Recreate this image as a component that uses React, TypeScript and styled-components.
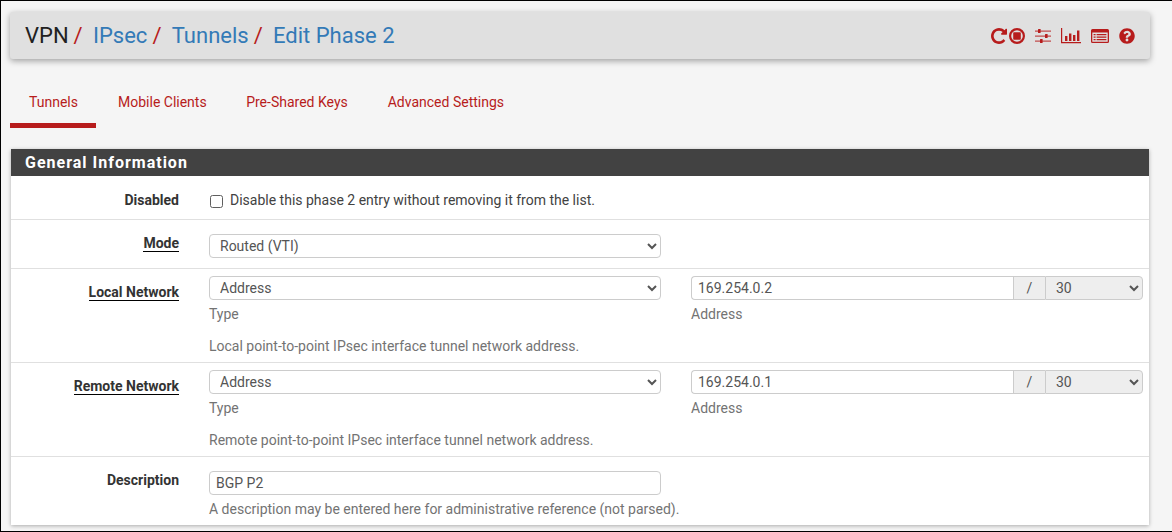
import styled, { createGlobalStyle } from 'styled-components';
import { FaQuestionCircle } from 'react-icons/fa';

const Global = createGlobalStyle`
  html, body {
    margin: 0;
    padding: 0;
    background: #f5f5f5;
  }
  * {
    box-sizing: border-box;
  }
`;

const Page = styled.div`
  width: 1172px;
  height: 532px;
  overflow: hidden;
  border: solid #000;
  border-width: 1px 0 1px 1px;
  padding: 11px 22px 0 9px;
  background: #f5f5f5;
  font-family: Roboto, 'Liberation Sans', sans-serif;
  font-size: 14px;
  color: #212121;
`;

const Header = styled.div`
  height: 47px;
  background: #e0e0e0;
  border-radius: 3px;
  box-shadow: 0 2px 6px rgba(0, 0, 0, 0.35);
  display: flex;
  align-items: center;
  justify-content: space-between;
  padding: 0 15px;
`;

const Crumbs = styled.div`
  display: flex;
  font-size: 22px;
  line-height: 26px;
`;

const Crumb = styled.span<{ $link?: boolean }>`
  color: ${(p) => (p.$link ? '#337ab7' : '#212121')};
  &::after {
    content: '/';
    color: #b71c1c;
    margin-left: 5px;
    margin-right: 10.3px;
  }
  &:last-child::after {
    content: none;
  }
`;

const Icons = styled.div`
  display: flex;
  align-items: center;
  color: #b71c1c;
  font-size: 16px;
  svg {
    display: block;
  }
`;

const IconSlot = styled.span<{ $gap: number; $width?: number }>`
  display: block;
  margin-left: ${(p) => p.$gap}px;
  svg {
    width: ${(p) => p.$width ?? 16}px;
    height: 16px;
  }
`;

const Tabs = styled.div`
  display: flex;
  height: 48px;
  margin-top: 21px;
`;

const Tab = styled.div<{ $active?: boolean }>`
  padding: 14px 20px 0 ${(p) => (p.$active ? 19 : 20)}px;
  width: ${(p) => (p.$active ? '86px' : 'auto')};
  color: #b71c1c;
  line-height: 16px;
  border-bottom: 5px solid ${(p) => (p.$active ? '#b71c1c' : 'transparent')};
  &:nth-child(2) {
    padding-left: 22px;
    padding-right: 19.5px;
  }
`;

const Panel = styled.div`
  margin: 21px 0 0 1px;
  width: 1138px;
  background: #fff;
  box-shadow: 0 1px 4px rgba(0, 0, 0, 0.3);
`;

const PanelTitle = styled.div`
  height: 27px;
  background: #424242;
  color: #fff;
  font-size: 16px;
  font-weight: 700;
  letter-spacing: 1px;
  line-height: 28px;
  padding-left: 14px;
`;

const Row = styled.div<{ $height: number; $pad: number }>`
  display: grid;
  grid-template-columns: 168px 452px 452px;
  column-gap: 30px;
  align-content: start;
  height: ${(p) => p.$height}px;
  padding-top: ${(p) => p.$pad}px;
  border-bottom: 1px solid #e0e0e0;
  &:last-child {
    border-bottom: 0;
  }
`;

const Label = styled.div<{ $top?: number }>`
  text-align: right;
  font-weight: 700;
  color: #333;
  line-height: 16px;
  margin-top: ${(p) => p.$top ?? 0}px;
`;

const Underlined = styled.span`
  border-bottom: 1px solid #000;
`;

const Field = styled.div`
  min-width: 0;
`;

const Wide = styled.div`
  grid-column: 2 / 4;
`;

const CheckLine = styled.label`
  display: flex;
  align-items: center;
  height: 16px;
  line-height: 16px;
  color: #424242;
  font-size: 14px;
`;

const Check = styled.span`
  width: 13px;
  height: 13px;
  border: 1px solid #5f5f5f;
  border-radius: 2.5px;
  background: #fff;
  margin: 3px 7px 0 1px;
`;

const Select = styled.select`
  display: block;
  width: 100%;
  height: 24px;
  border: 1px solid #ccc;
  border-radius: 4px;
  background: #fff;
  color: #555;
  font: 14px Roboto, 'Liberation Sans', sans-serif;
  padding: 0 6px;
`;

const TextInput = styled.input`
  display: block;
  width: 100%;
  height: 24px;
  border: 1px solid #ccc;
  border-radius: 4px;
  background: #fff;
  color: #555;
  font: 14px Roboto, 'Liberation Sans', sans-serif;
  padding: 0 7px 0 6px;
  outline: 0;
`;

const InputGroup = styled.div`
  display: flex;
`;

const GroupInput = styled(TextInput)`
  flex: 1;
  border-radius: 4px 0 0 4px;
  border-right: 0;
`;

const Slash = styled.span`
  width: 32px;
  height: 24px;
  background: #eee;
  border: 1px solid #ccc;
  border-width: 1px 0 1px 1px;
  text-align: center;
  line-height: 22px;
  color: #555;
`;

const Bits = styled(Select)`
  width: 98px;
  background: #eee;
  border-radius: 0 4px 4px 0;
`;

const Help = styled.div<{ $top: number }>`
  margin-top: ${(p) => p.$top}px;
  color: #737373;
  font-size: 14px;
  line-height: 16px;
  white-space: nowrap;
`;

function Reload() {
  return (
    <svg viewBox="0 128 1536 1536" fill="currentColor">
      <path d="M1536 256v448q0 26-19 45t-45 19h-448q-42 0-59-40-17-39 14-69l138-138q-148-137-349-137-104 0-198.5 40.5t-163.5 109.5-109.5 163.5-40.5 198.5 40.5 198.5 109.5 163.5 163.5 109.5 198.5 40.5q119 0 225-52t179-147q7-10 23-12 15 0 25 9l137 138q9 8 9.5 20.5t-7.5 22.5q-109 132-264 204.5t-327 72.5q-156 0-298-61t-245-164-164-245-61-298 61-298 164-245 245-164 298-61q147 0 284.5 55.5t244.5 156.5l130-129q29-31 70-14 39 17 39 59z" />
    </svg>
  );
}

function Stop() {
  return (
    <svg viewBox="0 0 16 16" fill="none">
      <circle cx="8" cy="8" r="6.9" stroke="currentColor" strokeWidth="2.2" />
      <rect x="4.2" y="4.2" width="7.6" height="7.6" rx=".8" fill="currentColor" />
    </svg>
  );
}

function Sliders() {
  return (
    <svg viewBox="0 0 16 16" fill="currentColor">
      <path d="M0 2.5h16v1.2H0zM0 7.5h16v1.2H0zM0 12.5h16v1.2H0z" opacity=".75" />
      <rect x="3" y="1" width="2.6" height="4" rx=".5" />
      <rect x="10" y="6" width="2.6" height="4" rx=".5" />
      <rect x="5" y="11" width="2.6" height="4" rx=".5" />
    </svg>
  );
}

function Chart() {
  return (
    <svg viewBox="0 0 20 16" fill="currentColor">
      <path d="M0 0h1.2v14H20v1.2H0z" />
      <path d="M4 8h2.4v5H4zM8 5.5h2.4V13H8zM12 7h2.4v6H12zM16 2.5h2.4V13H16z" />
    </svg>
  );
}

function ListBox() {
  return (
    <svg viewBox="0 0 18 16" fill="currentColor">
      <path
        fillRule="evenodd"
        d="M1.5 1h15A1.5 1.5 0 0 1 18 2.5v11a1.5 1.5 0 0 1-1.5 1.5h-15A1.5 1.5 0 0 1 0 13.5v-11A1.5 1.5 0 0 1 1.5 1zM1.3 4.6v9.1h15.4V4.6z"
      />
      <path d="M2.6 5.9h2v1.3h-2zM5.6 5.9h9.8v1.3H5.6zM2.6 8.4h2v1.3h-2zM5.6 8.4h9.8v1.3H5.6zM2.6 10.9h2v1.3h-2zM5.6 10.9h9.8v1.3H5.6z" />
    </svg>
  );
}

export default function App() {
  return (
    <Page>
      <Global />
      <Header>
        <Crumbs>
          <Crumb>VPN</Crumb>
          <Crumb $link>IPsec</Crumb>
          <Crumb $link>Tunnels</Crumb>
          <Crumb $link>Edit Phase 2</Crumb>
        </Crumbs>
        <Icons>
          <IconSlot $gap={0}>
            <Reload />
          </IconSlot>
          <IconSlot $gap={2}>
            <Stop />
          </IconSlot>
          <IconSlot $gap={10}>
            <Sliders />
          </IconSlot>
          <IconSlot $gap={10} $width={20}>
            <Chart />
          </IconSlot>
          <IconSlot $gap={10} $width={18}>
            <ListBox />
          </IconSlot>
          <IconSlot $gap={10}>
            <FaQuestionCircle />
          </IconSlot>
        </Icons>
      </Header>
      <Tabs>
        <Tab $active>Tunnels</Tab>
        <Tab>Mobile Clients</Tab>
        <Tab>Pre-Shared Keys</Tab>
        <Tab>Advanced Settings</Tab>
      </Tabs>
      <Panel>
        <PanelTitle>General Information</PanelTitle>
        <Row $height={44} $pad={16}>
          <Label>Disabled</Label>
          <Wide>
            <CheckLine>
              <Check />
              Disable this phase 2 entry without removing it from the list.
            </CheckLine>
          </Wide>
        </Row>
        <Row $height={49} $pad={14}>
          <Label $top={1}>
            <Underlined>Mode</Underlined>
          </Label>
          <Field>
            <Select defaultValue="vti">
              <option value="vti">Routed (VTI)</option>
            </Select>
          </Field>
        </Row>
        {[
          { name: 'Local Network', ip: '169.254.0.2', help: 'Local point-to-point IPsec interface tunnel network address.' },
          { name: 'Remote Network', ip: '169.254.0.1', help: 'Remote point-to-point IPsec interface tunnel network address.' },
        ].map((n) => (
          <Row $height={94} $pad={7} key={n.name}>
            <Label $top={8}>
              <Underlined>{n.name}</Underlined>
            </Label>
            <Field>
              <Select defaultValue="address">
                <option value="address">Address</option>
              </Select>
              <Help $top={6}>Type</Help>
              <Help $top={16}>{n.help}</Help>
            </Field>
            <Field>
              <InputGroup>
                <GroupInput readOnly value={n.ip} />
                <Slash>/</Slash>
                <Bits defaultValue="30">
                  <option value="30">30</option>
                </Bits>
              </InputGroup>
              <Help $top={6}>Address</Help>
            </Field>
          </Row>
        ))}
        <Row $height={68} $pad={14}>
          <Label $top={1}>Description</Label>
          <Field>
            <TextInput readOnly value="BGP P2" />
            <Help $top={6}>A description may be entered here for administrative reference (not parsed).</Help>
          </Field>
        </Row>
      </Panel>
    </Page>
  );
}
